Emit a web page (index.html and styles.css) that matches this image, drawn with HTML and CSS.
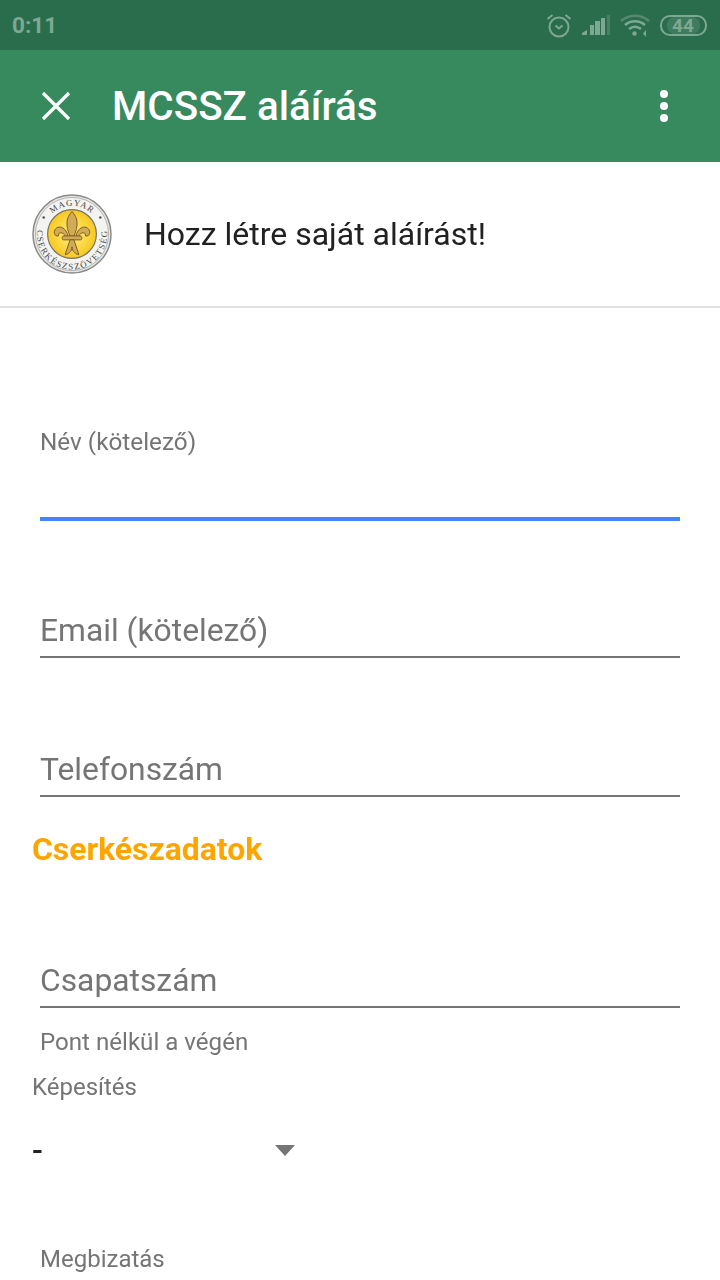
FILE: index.html
```html
<!DOCTYPE html>
<html lang="hu">
<head>
    <meta charset="UTF-8">
    <meta name="viewport" content="width=device-width, initial-scale=1.0">
    <title>MCSSZ aláírás</title>
    <link rel="stylesheet" href="styles.css">
</head>
<body>

<div class="statusbar">
    <span class="clock">0:11</span>
    <div class="status-icons">
        <svg class="ic-alarm" width="26" height="25" viewBox="0 0 26 25" fill="none" stroke="currentColor" stroke-width="2">
            <circle cx="13" cy="14" r="9.500"/>
            <path d="M9.500 12.500l3.500 3 3.500-3"/>
            <path d="M1.500 6l5-4M24.500 6l-5-4"/>
        </svg>
        <svg class="ic-signal" width="28" height="20" viewBox="0 0 28 20">
            <path d="M0 20v-2l5-3v5z" fill="currentColor"/>
            <rect x="8" y="10" width="4" height="10" fill="currentColor"/>
            <rect x="13" y="6" width="5" height="14" fill="currentColor"/>
            <rect x="19" y="3" width="4" height="17" fill="currentColor"/>
            <rect x="25" y="0" width="3" height="20" fill="currentColor" opacity="0.35"/>
        </svg>
        <svg class="ic-wifi" width="30" height="23" viewBox="0 0 30 23" fill="none" stroke="currentColor" stroke-width="2.600">
            <path d="M1 7c8-7 20-7 28 0" opacity="0.5"/>
            <path d="M5 11c6-5 14-5 20 0"/>
            <path d="M9 15c4-3 8-3 12 0"/>
            <circle cx="14.500" cy="19.500" r="2.200" fill="currentColor" stroke="none"/>
            <path d="M26 16l-3 3.500 3 3.500z" fill="currentColor" stroke="none"/>
        </svg>
        <div class="battery"><span>44</span></div>
    </div>
</div>

<div class="toolbar">
    <svg class="ic-close" width="30" height="30" viewBox="0 0 30 30" stroke="#fff" stroke-width="3.200">
        <path d="M2 2l26 26M28 2L2 28"/>
    </svg>
    <h1 class="title">MCSSZ aláírás</h1>
    <div class="more"><i></i><i></i><i></i></div>
</div>

<div class="form-head">
    <svg class="logo" width="80" height="80" viewBox="0 0 82 82">
        <defs>
            <path id="ringTop" d="M12 41a29 29 0 0 1 58 0"/>
            <path id="ringBottom" d="M6 33a36 36 0 1 0 70 0"/>
            <radialGradient id="sun">
                <stop offset="0.4" stop-color="#fde05a"/>
                <stop offset="1" stop-color="#f7c81f"/>
            </radialGradient>
        </defs>
        <circle cx="41" cy="41" r="40" fill="#e6e6e4" stroke="#8a8a88" stroke-width="1.500"/>
        <circle cx="41" cy="41" r="37.500" fill="#f3f3f1" stroke="#a5a5a3" stroke-width="0.800"/>
        <text class="logo-text"><textPath href="#ringTop" startOffset="50%" text-anchor="middle">MAGYAR</textPath></text>
        <text class="logo-text"><textPath href="#ringBottom" startOffset="50%" text-anchor="middle" textLength="122">CSERKÉSZSZÖVETSÉG</textPath></text>
        <circle cx="12" cy="24" r="1.300" fill="#55554f"/>
        <circle cx="70" cy="24" r="1.300" fill="#55554f"/>
        <circle cx="41" cy="41" r="25" fill="url(#sun)" stroke="#77736a" stroke-width="1.200"/>
        <path d="M41 18c6 6 7 14 2 25h-4c-5-11-4-19 2-25z" fill="#d2ab58" stroke="#7a5c20" stroke-width="1"/>
        <path d="M37 43c-2-8-8-11-12-8-4 3-2 9 2 8 0-3 2-4 4-3 2 1 3 2 3 4z" fill="#d2ab58" stroke="#7a5c20" stroke-width="1"/>
        <path d="M45 43c2-8 8-11 12-8 4 3 2 9-2 8 0-3-2-4-4-3-2 1-3 2-3 4z" fill="#d2ab58" stroke="#7a5c20" stroke-width="1"/>
        <rect x="31" y="43" width="20" height="4" rx="1.500" fill="#d2ab58" stroke="#7a5c20" stroke-width="1"/>
        <path d="M39 47h4l5 15c-3 0-7-3-7-8 0 5-4 8-7 8z" fill="#d2ab58" stroke="#7a5c20" stroke-width="1"/>
    </svg>
    <div class="form-head-text">Hozz létre saját aláírást!</div>
</div>

<div class="form">
    <div class="field field-focus">
        <label class="float-label">Név (kötelező)</label>
        <div class="line"></div>
    </div>
    <div class="field field-email">
        <div class="placeholder">Email (kötelező)</div>
        <div class="line"></div>
    </div>
    <div class="field field-phone">
        <div class="placeholder">Telefonszám</div>
        <div class="line"></div>
    </div>

    <h2 class="section">Cserkészadatok</h2>

    <div class="field field-troop">
        <div class="placeholder">Csapatszám</div>
        <div class="line"></div>
        <div class="hint">Pont nélkül a végén</div>
    </div>

    <div class="select-block">
        <div class="select-label">Képesítés</div>
        <div class="select">
            <span>-</span>
            <div class="arrow"></div>
        </div>
    </div>

    <div class="field field-last">
        <label class="float-label float-label-plain">Megbizatás</label>
    </div>
</div>

</body>
</html>
```

FILE: styles.css
```css
html, body {
    margin: 0;
    padding: 0;
}
body {
    width: 720px;
    height: 1280px;
    overflow: hidden;
    background-color: white;
    font-family: Roboto, sans-serif;
}
.statusbar {
    height: 50px;
    background-color: #2a6d4c;
    color: #7fa892;
    display: flex;
    justify-content: space-between;
    align-items: center;
    padding: 0 13px 0 12px;
    box-sizing: border-box;
}
.clock {
    font-size: 22.600px;
    font-weight: 700;
}
.status-icons {
    display: flex;
    align-items: center;
    gap: 10px;
}
.battery {
    width: 43px;
    height: 17px;
    border: 2px solid #7fa892;
    border-radius: 10px;
    display: flex;
    align-items: center;
    justify-content: center;
    font-size: 19px;
    font-weight: 700;
    overflow: hidden;
}
.battery span {
    padding: 0 6px 0 5px;
    border-radius: 8px;
    line-height: 17px;
    background-color: rgba(255, 255, 255, 0.1);
}
.toolbar {
    height: 112px;
    background-color: #368a5d;
    display: flex;
    align-items: center;
    padding: 0 52px 0 41px;
}
.title {
    margin: 0 0 0 41px;
    flex: 1;
    font-size: 40.400px;
    font-weight: 500;
    color: white;
}
.more {
    display: flex;
    flex-direction: column;
    gap: 4px;
}
.more i {
    display: block;
    width: 8px;
    height: 8px;
    border-radius: 50%;
    background-color: white;
}
.form-head {
    height: 146px;
    border-bottom: 2px solid #e0e0e0;
    box-sizing: border-box;
    display: flex;
    align-items: center;
    padding-left: 32px;
    gap: 32px;
}
.logo-text {
    font-family: "Liberation Serif", serif;
    font-size: 9px;
    fill: #44443f;
    letter-spacing: 1px;
}
.form-head-text {
    font-size: 32px;
    color: #212121;
    will-change: transform;
}
.form {
    padding: 0 40px;
    will-change: transform;
}
.field {
    color: #757575;
}
.float-label {
    display: block;
    font-size: 24.300px;
    line-height: 28px;
}
.float-label-plain {
    font-size: 24px;
}
.field-focus {
    padding-top: 120px;
}
.field-focus .float-label {
    margin-bottom: 61px;
}
.field-focus .line {
    height: 4px;
    background-color: #4285f4;
}
.line {
    height: 2px;
    background-color: #757575;
}
.placeholder {
    font-size: 31.800px;
    line-height: 38px;
    margin-bottom: 7px;
}
.field-email {
    padding-top: 90px;
}
.field-phone {
    padding-top: 92px;
}
.section {
    margin: 17px 0 0 -8px;
    font-size: 31.900px;
    line-height: 70px;
    font-weight: 700;
    color: orange;
}
.field-troop {
    padding-top: 77px;
}
.hint {
    font-size: 24.100px;
    line-height: 28px;
    margin-top: 20px;
}
.select-block {
    margin: 17px 0 0 -8px;
    color: #757575;
}
.select-label {
    font-size: 24px;
    line-height: 28px;
}
.select {
    width: 263px;
    height: 40px;
    margin-top: 29px;
    display: flex;
    justify-content: space-between;
    align-items: center;
    color: #212121;
    font-size: 32px;
    font-weight: 500;
}
.arrow {
    width: 0;
    height: 0;
    border-left: 10px solid transparent;
    border-right: 10px solid transparent;
    border-top: 11px solid #757575;
}
.field-last {
    padding-top: 75px;
}
```
